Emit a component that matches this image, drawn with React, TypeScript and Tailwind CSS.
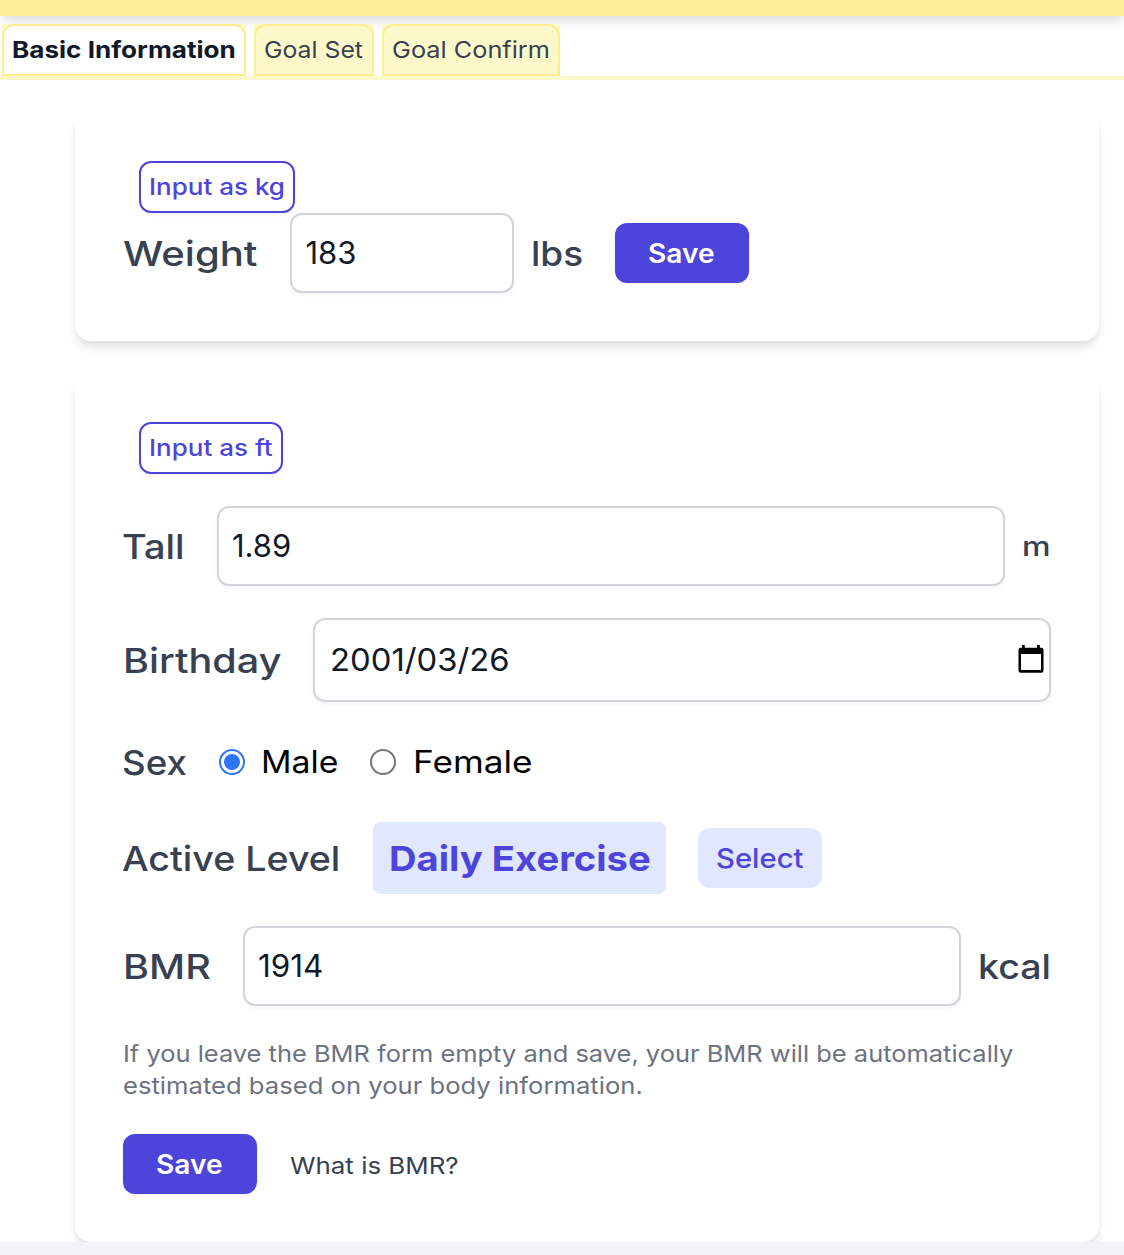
import type { ReactNode } from 'react';

const label = 'pt-[2px] text-[34.6px] font-medium text-[#374151]';
const field = 'rounded-xl border-2 border-[#d1d5db] bg-white shadow-[0_2px_4px_rgba(0,0,0,0.05)] flex items-center text-[31px] text-[#111827]';
const solidButton = 'flex h-[60px] w-[134px] shrink-0 items-center rounded-xl bg-[#4d45db] pt-[2px] pl-[33px] text-[27px] font-semibold text-white shadow-[0_2px_4px_rgba(0,0,0,0.05)]';
const outlineButton = 'ml-4 flex h-[52px] items-center rounded-xl border-2 border-[#4d45db] bg-white pl-[8px] text-[23px] font-medium text-[#4d45db] shadow-[0_2px_4px_rgba(0,0,0,0.05)]';
const card = 'ml-[75px] w-[1024px] rounded-2xl bg-white px-12 shadow-[0_8px_12px_-2px_rgba(0,0,0,0.1),0_4px_8px_-2px_rgba(0,0,0,0.06)]';

function Text({ className = '', children }: { className?: string; children: ReactNode }) {
  return <span className={`inline-block shrink-0 origin-left whitespace-nowrap ${className}`}>{children}</span>;
}

function Tab({ width, active = false, children }: { width: string; active?: boolean; children: ReactNode }) {
  return (
    <li className={`h-[52px] bg-[#fdf8ca] ${width}`}>
      <button
        className={`flex h-full w-full items-center rounded-t-xl border-2 border-[#fdee90] pl-[7.5px] text-[23px] ${
          active ? 'bg-white font-bold text-[#111827]' : 'text-[#374151]'
        }`}
      >
        {children}
      </button>
    </li>
  );
}

function CalendarIcon() {
  return (
    <svg className="-mt-[2px]" width="26" height="28" viewBox="0 0 26 28" fill="#000" aria-hidden="true">
      <path d="M4 0h2.8v3H4zM19 0h2.8v3H19z" />
      <path
        fillRule="evenodd"
        d="M2.7 2.7h20.6a2.2 2.2 0 0 1 2.2 2.2v20.6a2.2 2.2 0 0 1-2.2 2.2H2.7a2.2 2.2 0 0 1-2.2-2.2V4.9a2.2 2.2 0 0 1 2.2-2.2zM3 9v16h20V9z"
      />
    </svg>
  );
}

export default function App() {
  return (
    <div className="h-[1255px] w-[1124px] overflow-hidden bg-[#f2f3f5] font-['Inter',sans-serif]">
      <div className="h-[1242px] overflow-hidden bg-white">
        <header className="h-4 bg-[#fdee96] shadow-[0_8px_12px_-2px_rgba(0,0,0,0.1),0_4px_8px_-2px_rgba(0,0,0,0.06)]" />

        <ul className="relative mt-2 flex h-14 gap-2 border-b-4 border-[#fdf8ca] pl-[2px]">
          <Tab width="w-[244px]" active><Text className="scale-x-[1.135]">Basic Information</Text></Tab>
          <Tab width="w-[120px]"><Text className="scale-x-[1.078]">Goal Set</Text></Tab>
          <Tab width="w-[178px]"><Text className="scale-x-[1.1]">Goal Confirm</Text></Tab>
        </ul>

        <section className={`${card} mt-[33px] h-[228px] pt-12`}>
          <button className={`${outlineButton} w-[156px]`}><Text className="scale-x-[1.13]">Input as kg</Text></button>
          <div className="flex items-center">
            <div className={`${label} w-[167px] shrink-0`}><Text className="scale-x-[1.16]">Weight</Text></div>
            <div className={`${field} h-20 w-[224px] shrink-0 pl-[13.5px]`}><Text>183</Text></div>
            <div className={`${label} w-[101px] shrink-0 pl-[16.5px]`}><Text className="scale-x-[1.07]">lbs</Text></div>
            <button className={solidButton}><Text className="scale-x-[1.04]">Save</Text></button>
          </div>
        </section>

        <section className={`${card} mt-8 h-[869px] pt-[49px]`}>
          <button className={`${outlineButton} w-[144px]`}><Text className="scale-x-[1.13]">Input as ft</Text></button>

          <div className="mt-8 flex items-center">
            <div className={`${label} w-[94px] shrink-0`}><Text className="-ml-px scale-x-[1.095]">Tall</Text></div>
            <div className={`${field} h-20 w-[788px] shrink-0 pl-[13px]`}><Text>1.89</Text></div>
            <div className="pt-[2px] pl-[17px] text-[27px] font-medium text-[#374151]"><Text className="scale-x-[1.19]">m</Text></div>
          </div>

          <div className="mt-8 flex items-center">
            <div className={`${label} w-[190px] shrink-0`}><Text className="scale-x-[1.145]">Birthday</Text></div>
            <div className={`${field} h-[84px] w-[738px] shrink-0 justify-between pr-[5px] pl-[14.5px]`}>
              <Text className="scale-x-[1.058]">2001/03/26</Text>
              <CalendarIcon />
            </div>
          </div>

          <div className="mt-8 flex h-14 items-center text-[31px] text-black">
            <div className={`${label} w-[96px] shrink-0`}><Text className="-ml-px scale-x-[1.06]">Sex</Text></div>
            <span className="flex size-[26px] shrink-0 items-center justify-center rounded-full border-2 border-[#2f73f5]">
              <span className="size-4 rounded-full bg-[#2f73f5]" />
            </span>
            <div className="w-[125px] shrink-0 pl-4"><Text className="scale-x-[1.09]">Male</Text></div>
            <span className="size-[26px] shrink-0 rounded-full border-2 border-[#767676]" />
            <div className="pl-[16.5px]"><Text className="scale-x-[1.135]">Female</Text></div>
          </div>

          <div className="mt-8 flex h-[72px] items-center">
            <div className={`${label} w-[250px] shrink-0`}><Text className="-ml-px scale-x-[1.087]">Active Level</Text></div>
            <div className="flex h-[72px] w-[293px] shrink-0 items-center rounded-lg bg-[#e1e7fd] pt-[2px] pl-[16px] text-[34.6px] font-bold text-[#4d45db]">
              <Text className="scale-x-[1.104]">Daily Exercise</Text>
            </div>
            <button className="ml-8 flex h-[60px] w-[124px] shrink-0 items-center rounded-xl bg-[#e1e7fd] pt-[2px] pl-[18px] text-[27px] font-medium text-[#4d45db]">
              <Text className="scale-x-[1.084]">Select</Text>
            </button>
          </div>

          <div className="mt-8 flex items-center">
            <div className={`${label} w-[120px] shrink-0`}><Text className="scale-x-[1.145]">BMR</Text></div>
            <div className={`${field} h-20 w-[718px] shrink-0 pl-[13px]`}><Text className="scale-x-[1.015]">1914</Text></div>
            <div className={`${label} pl-[16.5px]`}><Text className="scale-x-[1.087]">kcal</Text></div>
          </div>

          <p className="mt-8 flex flex-col items-start text-[23px] leading-8 text-[#6b7280]">
            <Text className="scale-x-[1.106]">If you leave the BMR form empty and save, your BMR will be automatically</Text>
            <Text className="scale-x-[1.114]">estimated based on your body information.</Text>
          </p>

          <div className="mt-8 flex items-center">
            <button className={solidButton}><Text className="scale-x-[1.04]">Save</Text></button>
            <div className="mt-[4px] ml-[32.5px] text-[23px] text-[#374151]"><Text className="scale-x-[1.126]">What is BMR?</Text></div>
          </div>
        </section>
      </div>
    </div>
  );
}
